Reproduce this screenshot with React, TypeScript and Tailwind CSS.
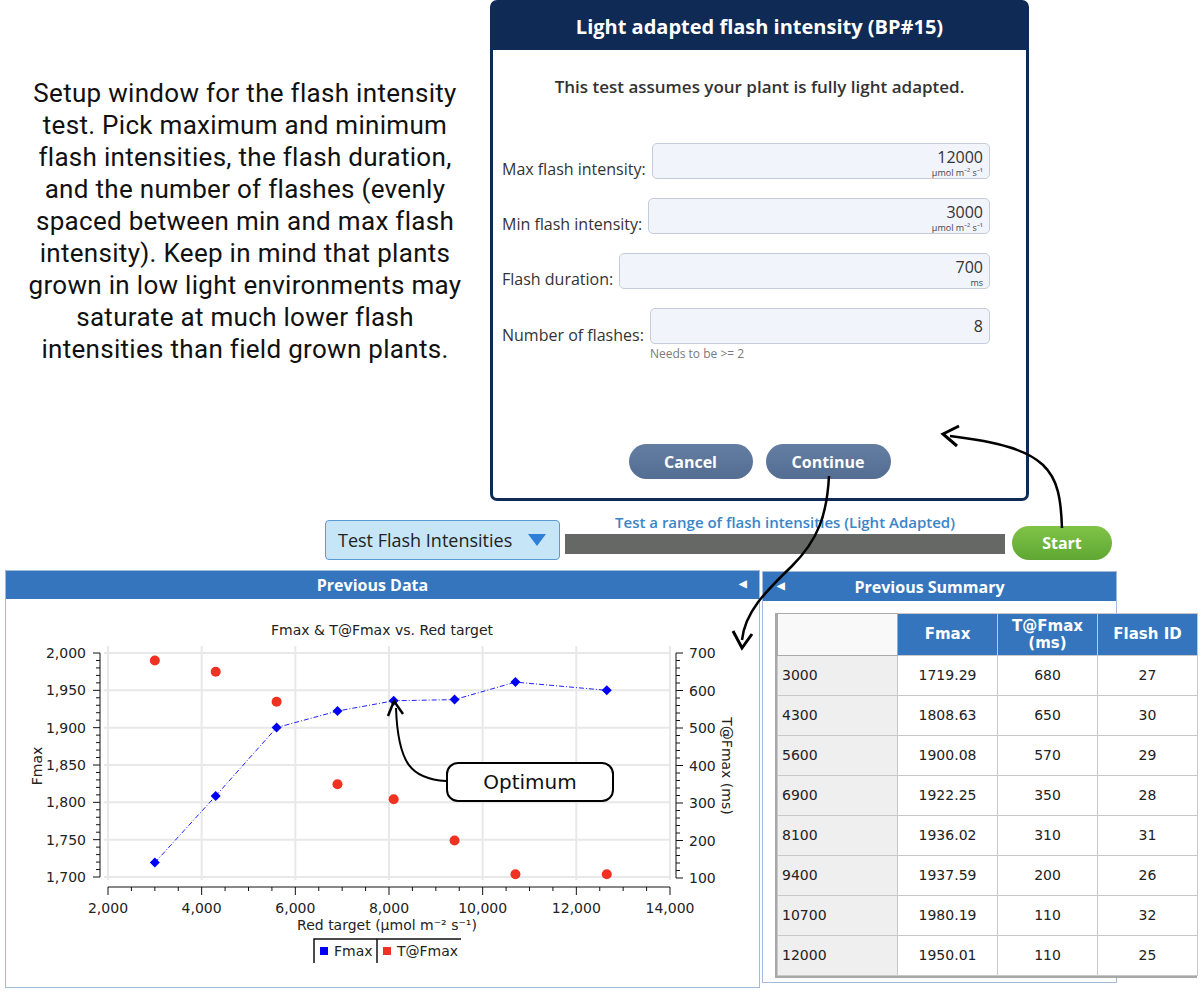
import React from 'react';

const fx = (v: number) => 108 + (v - 2000) * (562 / 12000);
const fy = (v: number) => 876 - (v - 1700) * (224 / 300);
const fr = (v: number) => 877 - (v - 100) * (225 / 600);

const fmax: [number, number][] = [
  [3000, 1719.29], [4300, 1808.63], [5600, 1900.08], [6900, 1922.25],
  [8100, 1936.02], [9400, 1937.59], [10700, 1961], [12650, 1950],
];
const tAt: [number, number][] = [
  [3000, 680], [4300, 650], [5600, 570], [6900, 350],
  [8100, 310], [9400, 200], [10700, 110], [12650, 110],
];

const rows = [
  ['3000', '1719.29', '680', '27'],
  ['4300', '1808.63', '650', '30'],
  ['5600', '1900.08', '570', '29'],
  ['6900', '1922.25', '350', '28'],
  ['8100', '1936.02', '310', '31'],
  ['9400', '1937.59', '200', '26'],
  ['10700', '1980.19', '110', '32'],
  ['12000', '1950.01', '110', '25'],
];

const Field = ({ label, value, unit }: { label: string; value: string; unit?: string }) => (
  <div className="flex items-end gap-[6px]">
    <span className="text-[16px] leading-[20px] text-[#333] whitespace-nowrap">{label}</span>
    <div className="flex-1 h-[36px] bg-[#f2f4fb] border border-[#c5ccd9] rounded-[5px] flex flex-col items-end pt-[5px] pr-[6px]">
      <span className="text-[16px] leading-[16px] text-[#333]">{value}</span>
      {unit && <span className="mt-[3px] text-[9px] leading-[9px] text-[#444]">{unit}</span>}
    </div>
  </div>
);

const Chart = () => {
  const hGrid = [1700, 1750, 1800, 1850, 1900, 1950, 2000];
  const vGrid = [2000, 4000, 6000, 8000, 10000, 12000, 14000];
  const leftMinor = Array.from({ length: 31 }, (_, i) => 1700 + i * 10);
  const rightMinor = Array.from({ length: 31 }, (_, i) => 100 + i * 20);
  const xMinor = Array.from({ length: 25 }, (_, i) => 2000 + i * 500);
  const linePts = fmax.map(([x, y]) => `${fx(x)},${fy(y)}`).join(' ');
  return (
    <svg width="753" height="388" viewBox="6 598 753 388" className="block font-['DejaVu_Sans',sans-serif]">
      <text x="382" y="634" textAnchor="middle" fontSize="14" fill="#222">Fmax &amp; T@Fmax vs. Red target</text>
      {hGrid.map((v) => (
        <line key={'h' + v} x1="104" x2="670" y1={fy(v)} y2={fy(v)} stroke="#e8e8e8" strokeWidth="2" />
      ))}
      {vGrid.map((v) => (
        <line key={'v' + v} x1={fx(v)} x2={fx(v)} y1="645" y2="879" stroke="#e8e8e8" strokeWidth="2" />
      ))}
      {/* left axis */}
      <line x1="100" x2="100" y1={fy(2000)} y2={fy(1700)} stroke="#111" />
      {leftMinor.map((v) => (
        <line key={'lm' + v} x1={v % 50 === 0 ? 93 : 96} x2="100" y1={fy(v)} y2={fy(v)} stroke="#111" />
      ))}
      {hGrid.map((v) => (
        <text key={'lt' + v} x="86" y={fy(v) + 5} textAnchor="end" fontSize="14" fill="#222">
          {v.toLocaleString('en-US')}
        </text>
      ))}
      <text x="37" y="770" textAnchor="middle" fontSize="14" fill="#222" transform="rotate(-90 37 765)">Fmax</text>
      {/* right axis */}
      <line x1="676" x2="676" y1={fr(700)} y2={fr(100)} stroke="#111" />
      {rightMinor.map((v) => (
        <line key={'rm' + v} x1="676" x2={v % 100 === 0 ? 683 : 680} y1={fr(v)} y2={fr(v)} stroke="#111" />
      ))}
      {[100, 200, 300, 400, 500, 600, 700].map((v) => (
        <text key={'rt' + v} x="689" y={fr(v) + 5} fontSize="14" fill="#222">{v}</text>
      ))}
      <text x="727" y="770" textAnchor="middle" fontSize="14" fill="#222" transform="rotate(90 727 765)">T@Fmax (ms)</text>
      {/* x axis */}
      <line x1="108" x2="670" y1="886" y2="886" stroke="#111" />
      {xMinor.map((v) => (
        <line key={'xm' + v} x1={fx(v)} x2={fx(v)} y1="886" y2={v % 2000 === 0 ? 894 : 890} stroke="#111" />
      ))}
      {vGrid.map((v) => (
        <text key={'xt' + v} x={fx(v)} y="912" textAnchor="middle" fontSize="14" fill="#222">
          {v.toLocaleString('en-US')}
        </text>
      ))}
      <text x="387" y="929" textAnchor="middle" fontSize="14" fill="#222">Red target (µmol m⁻² s⁻¹)</text>
      {/* series */}
      <polyline points={linePts} fill="none" stroke="#2020ff" strokeWidth="1" strokeDasharray="5 2 1 2" />
      {fmax.map(([x, y], i) => {
        const cx = fx(x);
        const cy = fy(y);
        return <polygon key={'d' + i} points={`${cx},${cy - 5} ${cx + 5},${cy} ${cx},${cy + 5} ${cx - 5},${cy}`} fill="#0000f5" />;
      })}
      {tAt.map(([x, y], i) => (
        <circle key={'c' + i} cx={fx(x)} cy={fr(y)} r="5" fill="#ef3222" />
      ))}
      {/* legend */}
      <polyline points="314,962 314,938 461,938" fill="none" stroke="#111" strokeWidth="1.5" />
      <line x1="377" x2="377" y1="938" y2="962" stroke="#111" strokeWidth="1.5" />
      <rect x="320" y="946" width="8" height="8" fill="#0000f5" />
      <text x="334" y="955" fontSize="14" fill="#222">Fmax</text>
      <rect x="383" y="946" width="8" height="8" fill="#ef3222" />
      <text x="397" y="955" fontSize="14" fill="#222">T@Fmax</text>
    </svg>
  );
};

export default function App() {
  return (
    <div className="relative w-[1200px] h-[1004px] bg-white overflow-hidden font-['Open_Sans',sans-serif]">
      {/* top row */}
      <div className="flex">
        <div className="w-[490px] pt-[77px] text-center text-[26px] leading-[32px] tracking-[0.3px] text-[#111] font-['Roboto',sans-serif]">
          Setup window for the flash intensity<br />
          test. Pick maximum and minimum<br />
          flash intensities, the flash duration,<br />
          and the number of flashes (evenly<br />
          spaced between min and max flash<br />
          intensity). Keep in mind that plants<br />
          grown in low light environments may<br />
          saturate at much lower flash<br />
          intensities than field grown plants.
        </div>
        <div className="w-[539px] h-[501px] border-[3px] border-[#0f2a55] rounded-[7px] flex flex-col bg-white">
          <div className="h-[47px] bg-[#0f2a55] flex items-center justify-center text-white text-[20px] font-bold">
            Light adapted flash intensity (BP#15)
          </div>
          <div className="flex-1 flex flex-col pl-[9px] pr-[36px] pb-[19px]">
            <p className="pt-[26px] text-center text-[17px] leading-[22px] font-semibold text-[#333] pl-[27px]">
              This test assumes your plant is fully light adapted.
            </p>
            <div className="mt-[45px] flex flex-col gap-[19px]">
              <Field label="Max flash intensity:" value="12000" unit="µmol m⁻² s⁻¹" />
              <Field label="Min flash intensity:" value="3000" unit="µmol m⁻² s⁻¹" />
              <Field label="Flash duration:" value="700" unit="ms" />
              <div className="flex items-start gap-[6px]">
                <span className="mt-[17px] text-[16px] leading-[20px] text-[#333] whitespace-nowrap">Number of flashes:</span>
                <div className="flex-1 flex flex-col">
                  <div className="h-[36px] bg-[#f2f4fb] border border-[#c5ccd9] rounded-[5px] flex items-center justify-end pr-[6px]">
                    <span className="text-[16px] text-[#333]">8</span>
                  </div>
                  <span className="mt-[2px] text-[12px] leading-[16px] text-[#7a7a7a]">Needs to be &gt;= 2</span>
                </div>
              </div>
            </div>
            <div className="mt-auto flex justify-center gap-[13px] pl-[27px]">
              <button className="w-[124px] h-[35px] rounded-full bg-gradient-to-b from-[#647ea2] to-[#546d92] text-white text-[16px] font-bold">
                Cancel
              </button>
              <button className="w-[125px] h-[35px] rounded-full bg-gradient-to-b from-[#647ea2] to-[#546d92] text-white text-[16px] font-bold">
                Continue
              </button>
            </div>
          </div>
        </div>
      </div>

      {/* toolbar row */}
      <div className="mt-[11px] h-[48px] flex items-end pl-[325px]">
        <div className="w-[235px] h-[40px] bg-[#c6e6f8] border border-[#5a9ad6] rounded-[4px] flex items-center justify-between pl-[12px] pr-[13px]">
          <span className="text-[18px] text-[#222]">Test Flash Intensities</span>
          <svg width="18" height="12" viewBox="0 0 18 12">
            <polygon points="0,0 18,0 9,12" fill="#2f7fd6" />
          </svg>
        </div>
        <div className="ml-[5px] w-[440px] pb-[6px] flex flex-col items-center">
          <span className="mb-[3px] text-[15px] leading-[18px] font-semibold text-[#3a85c8]">
            Test a range of flash intensities (Light Adapted)
          </span>
          <div className="w-full h-[20px] bg-[#666866]" />
        </div>
        <button className="ml-[7px] w-[100px] h-[34px] rounded-full bg-gradient-to-b from-[#80c447] to-[#5fa733] text-white text-[16px] font-bold">
          Start
        </button>
      </div>

      {/* panels row */}
      <div className="mt-[10px] flex items-start">
        <div className="ml-[5px] w-[755px] h-[418px] border border-[#a3bad8] flex flex-col">
          <div className="h-[28px] bg-[#3575bd] relative flex items-center justify-center text-white text-[16px] font-bold">
            <span className="-ml-[20px]">Previous Data</span>
            <span className="absolute right-[12px] top-[5px] text-[10px]">◀</span>
          </div>
          <Chart />
        </div>
        <div className="mt-[1px] ml-[2px] w-[355px] h-[412px] border border-[#a3bad8] flex flex-col">
          <div className="h-[29px] bg-[#3575bd] relative flex items-center justify-center text-white text-[16px] font-bold">
            <span className="ml-[-20px]">Previous Summary</span>
            <span className="absolute left-[14px] top-[6px] text-[10px]">◀</span>
          </div>
          <div className="mt-[12px] ml-[12px] w-[422px] relative z-10 bg-white border-l-2 border-b-2 border-[#a8a8a8] font-['DejaVu_Sans',sans-serif]">
            <table className="border-collapse table-fixed w-[420px] text-[14px] text-[#222]">
              <colgroup>
                <col className="w-[120px]" />
                <col className="w-[100px]" />
                <col className="w-[100px]" />
                <col className="w-[100px]" />
              </colgroup>
              <thead>
                <tr className="h-[42px]">
                  <th className="bg-[#f9f9f9] border border-[#aaaaaa]" />
                  <th className="bg-[#3575bd] text-white font-bold text-[15px] leading-[17px] border border-[#c8c8c8]">Fmax</th>
                  <th className="bg-[#3575bd] text-white font-bold text-[15px] leading-[17px] border border-[#c8c8c8]">T@Fmax<br />(ms)</th>
                  <th className="bg-[#3575bd] text-white font-bold text-[15px] leading-[17px] border border-[#c8c8c8]">Flash ID</th>
                </tr>
              </thead>
              <tbody>
                {rows.map((r) => (
                  <tr key={r[0]} className="h-[40px]">
                    <td className="bg-[#efefef] border border-[#c8c8c8] pl-[4px]">{r[0]}</td>
                    <td className="border border-[#c8c8c8] text-center">{r[1]}</td>
                    <td className="border border-[#c8c8c8] text-center">{r[2]}</td>
                    <td className="border border-[#c8c8c8] text-center">{r[3]}</td>
                  </tr>
                ))}
              </tbody>
            </table>
          </div>
        </div>
      </div>

      {/* annotation callout */}
      <div className="absolute left-[446px] top-[762px] w-[168px] h-[40px] border-[2.5px] border-black rounded-[12px] bg-white flex items-center justify-center text-[20px] text-[#111] font-['DejaVu_Sans',sans-serif]">
        Optimum
      </div>

      {/* annotation arrows */}
      <svg className="absolute inset-0 pointer-events-none" width="1200" height="1004" viewBox="0 0 1200 1004">
        <path d="M829 476 C827 515 818 540 792 566 C765 592 745 612 742 640" fill="none" stroke="#000" strokeWidth="2.5" />
        <path d="M733 631 L742 648 L752 634" fill="none" stroke="#000" strokeWidth="3" strokeLinejoin="miter" />
        <path d="M1062 528 C1060 470 1050 448 950 436" fill="none" stroke="#000" strokeWidth="2.5" />
        <path d="M959 426 L943 434 L957 446" fill="none" stroke="#000" strokeWidth="3" />
        <path d="M446 781 C412 779 398 765 396 708" fill="none" stroke="#000" strokeWidth="2" />
        <path d="M388 716 L394 701 L403 714" fill="none" stroke="#000" strokeWidth="2.5" />
      </svg>
    </div>
  );
}
